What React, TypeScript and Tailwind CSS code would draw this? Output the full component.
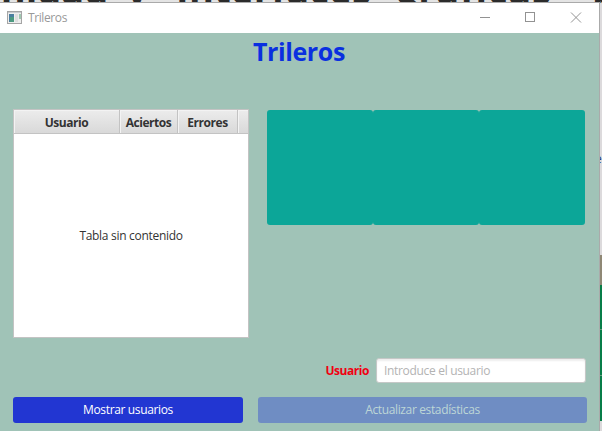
import { ReactNode } from "react";

function HeaderCell({ className, children }: { className: string; children?: ReactNode }) {
  return (
    <div
      className={`flex h-6 shrink-0 items-center justify-center border-r border-b border-[#c3c3c3] bg-linear-to-b from-[#ececec] to-[#d9d9d9] pt-[2px] text-xs font-bold tracking-[-0.45px] text-[#333] shadow-[inset_1px_1px_0_#f3f3f3] ${className}`}
    >
      {children}
    </div>
  );
}

function TitleBar() {
  return (
    <header className="flex h-[30px] items-center bg-white pl-[7px]">
      <svg width="16" height="14" viewBox="0 0 16 14" shapeRendering="crispEdges">
        <rect x="0.5" y="0.5" width="14" height="12" fill="#eeeeee" stroke="#a5a5a5" />
        <rect x="1" y="1" width="13" height="1" fill="#c9ccd0" />
        <rect x="2" y="3" width="5" height="8" fill="#4b7fa0" />
        <rect x="3" y="6" width="4" height="5" fill="#4c9a80" />
        <rect x="8" y="3" width="3" height="8" fill="#dedede" />
        <rect x="12" y="3" width="2" height="5" fill="#9fc7b0" />
      </svg>
      <span className="ml-[5px] text-xs tracking-[-0.6px] text-[#999]">
        <span className="tracking-[-0.4px]">Trileros</span>
      </span>
      <svg className="ml-auto mr-[17px]" width="102" height="12" viewBox="0 0 102 12" fill="none" stroke="#929292">
        <path d="M0 5.5h10" />
        <rect x="45.5" y="0.5" width="9" height="9" />
        <path d="M91 0.500l10 10M101 0.500l-10 10" />
      </svg>
    </header>
  );
}

export default function App() {
  return (
    <div className="relative h-[431px] w-[602px] overflow-hidden bg-[#e4e4e4] font-['Open_Sans','Noto_Sans',sans-serif]">
      <div className="absolute top-[-37px] left-[-28px] flex text-[38px] leading-[52px] font-bold whitespace-nowrap text-[#2b2b2b]">
        <span className="w-[154px]">Unidad</span>
        <span className="w-[50px]">y</span>
        <span className="w-[220px] tracking-[0.3px]">Interfaces</span>
        <span className="w-[196px] tracking-[0.8px]">gráficas</span>
        <span>p</span>
      </div>
      <aside className="absolute top-[3px] right-0 flex h-[428px] w-[3px] flex-col bg-[#dcdadc]">
        <div className="h-[150px]" />
        <div className="h-3 overflow-hidden text-xs leading-3 text-[#203f80]">
          <span className="-ml-1">e</span>
        </div>
        <div className="mt-[90px] h-[30px] shrink-0 bg-[#8f8875]" />
        <div className="h-[45px] shrink-0 border-b border-[#679c80] bg-[#087d48]" />
        <div className="h-[46px] shrink-0 border-b border-[#679c80] bg-[#087d48]" />
        <div className="h-[45px] shrink-0 bg-[#087d48]" />
      </aside>
      <div className="absolute top-[2px] left-0 flex h-[429px] w-[600px] flex-col border-t border-r border-[#aaa] bg-[#a0c3b7]">
        <TitleBar />
        <h1 className="h-[76px] pl-[253px] text-[25px] leading-[37px] font-bold tracking-[-0.4px] text-[#0a2fe0]">
          <span>Trileros</span>
        </h1>
        <div className="flex h-[229px] pl-[13px]">
          <section className="flex w-[236px] flex-col border border-[#c3c3c3] bg-white">
            <div className="flex h-6 bg-[#e2e2e2]">
              <HeaderCell className="w-[106px]">Usuario</HeaderCell>
              <HeaderCell className="w-[58px]">Aciertos</HeaderCell>
              <HeaderCell className="w-[60px]">Errores</HeaderCell>
              <HeaderCell className="w-[10px] border-r-0" />
            </div>
            <div className="flex grow items-center justify-center text-xs tracking-[-0.3px] text-[#333]">
              <span>Tabla sin contenido</span>
            </div>
          </section>
          <section className="mt-px ml-[18px] flex h-[115px]">
            <div className="w-[106px] rounded-[3px] bg-[#0ca698]" />
            <div className="w-[106px] rounded-[3px] bg-[#0ca698]" />
            <div className="w-[106px] rounded-[3px] bg-[#0ca698]" />
          </section>
        </div>
        <div className="mt-5 flex h-[25px] items-center justify-end pr-[13px]">
          <label className="mr-[7px] text-xs font-bold tracking-[-0.45px] text-[#f00012]">Usuario</label>
          <div className="flex h-[25px] w-[210px] items-center rounded-[3px] border border-[#c5c8c7] bg-white pl-[7px] text-xs tracking-[-0.32px] text-[#b3b3b3] shadow-[inset_0_2px_2px_#eee]">
            <span>Introduce el usuario</span>
          </div>
        </div>
        <div className="mt-[14px] flex gap-[15px] pl-[13px] text-xs tracking-[-0.36px]">
          <button className="h-[26px] w-[230px] rounded-[3px] bg-[#2236d2] text-white">
            <span>Mostrar usuarios</span>
          </button>
          <button className="h-[26px] w-[329px] rounded-[3px] bg-[#6f8dc3] text-[#bdd6d6]">
            <span>Actualizar estadísticas</span>
          </button>
        </div>
      </div>
    </div>
  );
}
